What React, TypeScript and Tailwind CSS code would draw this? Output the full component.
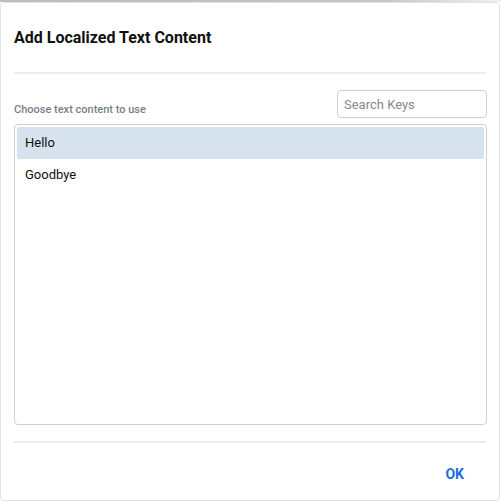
export default function App() {
  const items = ["Hello", "Goodbye"];
  return (
    <div className="h-[502px] w-[501px] bg-white font-['Roboto',sans-serif]">
      <div className="h-[2px] w-full bg-gradient-to-r from-[#bdbdbd] via-[#c4c4c4] via-75% to-[#f0f0f0]" />
      <div className="flex h-[499px] w-[500px] flex-col rounded-[4px] border border-[#e3e3e3] bg-white px-[13px]">
        <h1 className="pt-[24px] text-[16px] font-bold leading-[22px] text-[#111]">
          Add Localized Text Content
        </h1>
        <div className="mt-[23px] h-[2px] bg-[#ececec]" />
        <div className="mt-[16px] flex items-end justify-between">
          <span className="pb-[1px] text-[11px] font-medium leading-[14px] text-[#7a7f86]">
            Choose text content to use
          </span>
          <input
            placeholder="Search Keys"
            className="mr-[-1px] h-[28px] w-[150px] rounded-[4px] border border-[#cfcfcf] px-[6px] text-[13px] text-[#333] outline-none placeholder:text-[#8a8a8a]"
          />
        </div>
        <div className="mt-[6px] mr-[-1px] h-[301px] rounded-[4px] border border-[#cfcfcf] p-[2px]">
          {items.map((item, i) => (
            <div
              key={item}
              className={
                i === 0
                  ? "flex h-[32px] items-center rounded-[2px] bg-[#d6e3ee] px-[8px] text-[13px] text-[#111]"
                  : "flex h-[32px] items-center px-[8px] text-[13px] text-[#111]"
              }
            >
              {item}
            </div>
          ))}
        </div>
        <div className="mt-[16px] h-[2px] bg-[#ececec]" />
        <div className="flex justify-end pr-[22px] pt-[22px]">
          <button className="text-[14px] font-bold leading-[18px] text-[#1a6ed8]">OK</button>
        </div>
      </div>
    </div>
  );
}
